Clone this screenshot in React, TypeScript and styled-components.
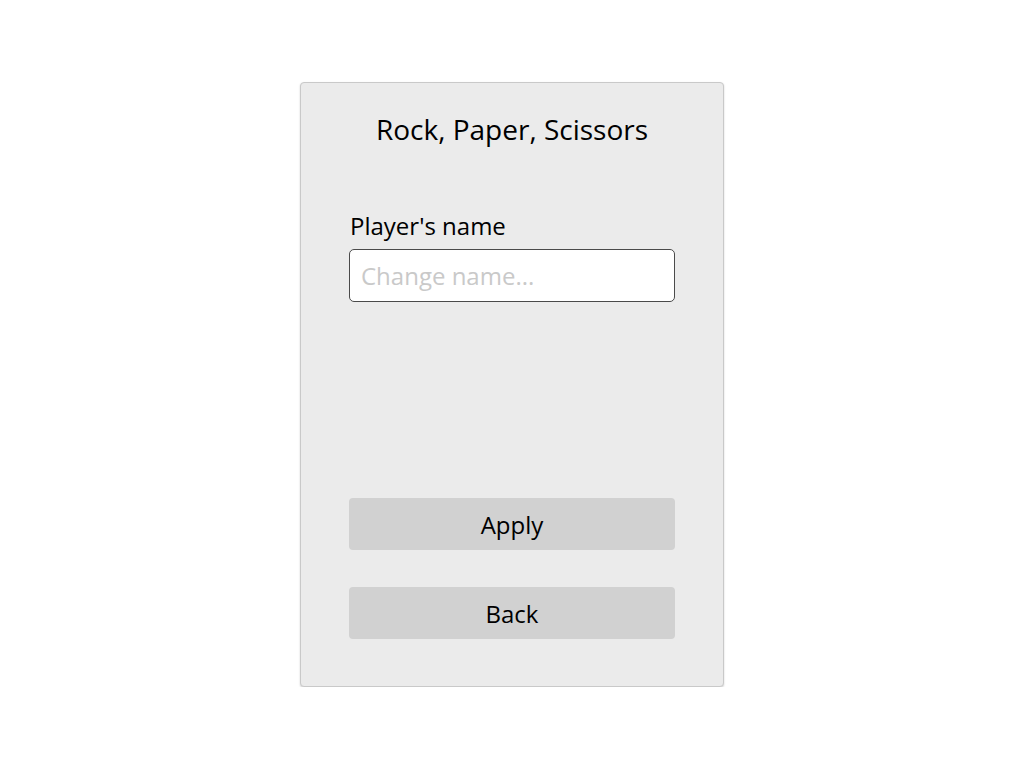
import styled, { createGlobalStyle } from "styled-components";

const GlobalStyle = createGlobalStyle`
    html, body {
        margin: 0;
        padding: 0;
        background: #ffffff;
        font-family: "Open Sans", "Noto Sans", sans-serif;
        color: #000000;
    }
`;

const SdivPage = styled.div`
    display: flex;
    justify-content: center;
    padding-top: 82px;
`;
const SdivCard = styled.div`
    box-sizing: border-box;
    width: 424px;
    height: 605px;
    display: flex;
    flex-direction: column;
    padding: 27px 48px 47px 48px;
    background: #ebebeb;
    border: 1px solid #c9c9c9;
    border-radius: 4px;
    box-shadow: 0 1px 2px rgba(0, 0, 0, 0.18);
`;
const Sh1Title = styled.h1`
    margin: 0;
    font-size: 28px;
    font-weight: 400;
    text-align: center;
`;
const SlabelName = styled.label`
    margin-top: 61px;
    font-size: 24px;
    padding-left: 1px;
`;
const SinputName = styled.input`
    box-sizing: border-box;
    margin-top: 7px;
    width: 100%;
    height: 53px;
    padding: 0 11px;
    font-family: inherit;
    font-size: 24px;
    color: #000000;
    background: #ffffff;
    border: 1px solid #4a4a4a;
    border-radius: 5px;
    outline: none;
    &::placeholder {
        color: #c9c9c9;
    }
`;
const SdivButtons = styled.div`
    margin-top: auto;
    display: flex;
    flex-direction: column;
    gap: 37px;
`;
const SbuttonAction = styled.button`
    height: 52px;
    width: 100%;
    border: none;
    border-radius: 4px;
    background: #d1d1d1;
    font-family: inherit;
    font-size: 24px;
    color: #000000;
    cursor: pointer;
`;

const App = () => {
    return (
        <>
            <GlobalStyle />
            <SdivPage>
                <SdivCard>
                    <Sh1Title>Rock, Paper, Scissors</Sh1Title>
                    <SlabelName htmlFor="player-name">Player's name</SlabelName>
                    <SinputName id="player-name" placeholder="Change name..." />
                    <SdivButtons>
                        <SbuttonAction>Apply</SbuttonAction>
                        <SbuttonAction>Back</SbuttonAction>
                    </SdivButtons>
                </SdivCard>
            </SdivPage>
        </>
    );
};

export default App;
